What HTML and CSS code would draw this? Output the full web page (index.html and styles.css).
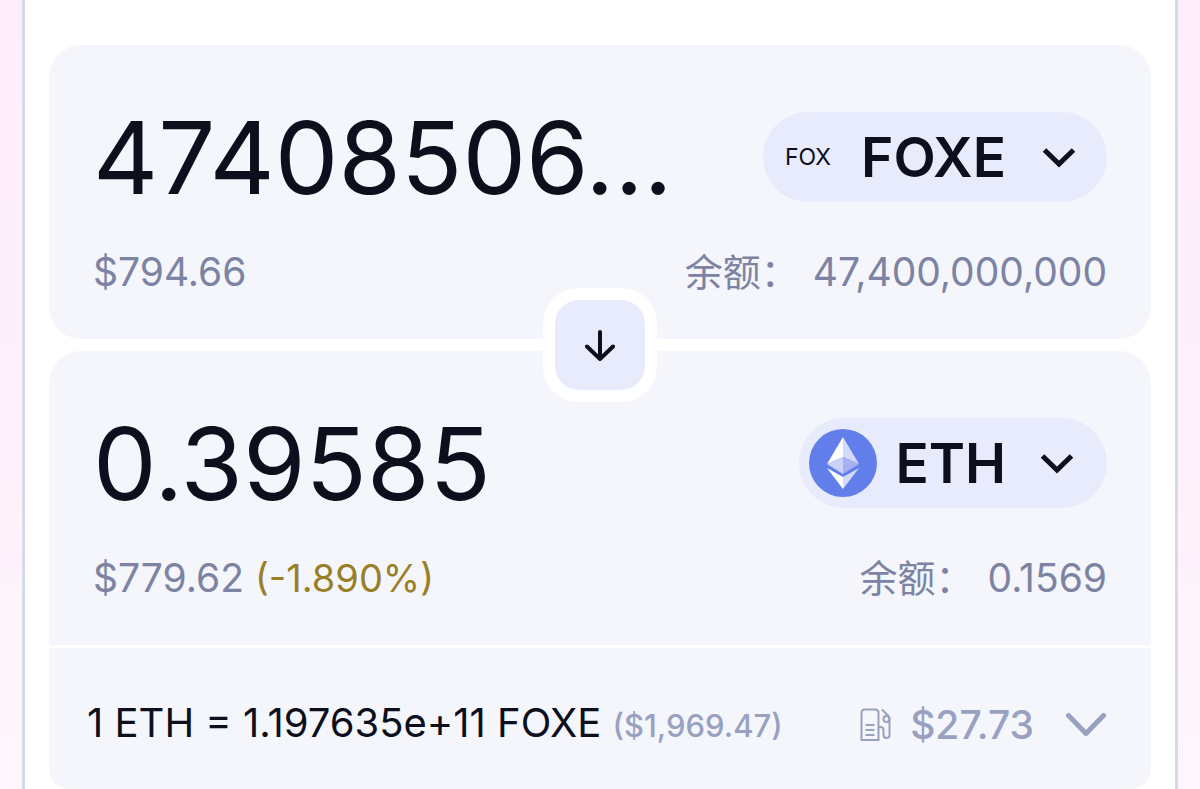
FILE: index.html
```html
<!DOCTYPE html>
<html lang="zh-CN">
<head>
<meta charset="utf-8">
<meta name="viewport" content="width=device-width, initial-scale=1">
<title>FOXE / ETH</title>
<link rel="stylesheet" href="styles.css">
</head>
<body>
<main class="swap">
  <section class="card card-pay">
    <div class="row">
      <input class="amount" type="text" aria-label="FOXE" value="47408506...">
      <button class="token token-text" type="button">
        <span class="token-mark">FOX</span>
        <span class="token-name">FOXE</span>
        <svg class="chevron" viewBox="0 0 34 22" aria-hidden="true"><path d="M2.500 4 17 18 31.500 4"/></svg>
      </button>
    </div>
    <div class="row row-info">
      <span>$794.66</span>
      <span class="balance"><span class="balance-label">余额：</span><span>47,400,000,000</span></span>
    </div>
  </section>

  <div class="switch">
    <button class="switch-button" type="button" aria-label="FOXE / ETH">
      <svg viewBox="0 0 32 32" aria-hidden="true"><path d="M16 3v27M3 17.500 16 30l13-12.500"/></svg>
    </button>
  </div>

  <section class="card card-receive">
    <div class="row">
      <input class="amount" type="text" aria-label="ETH" value="0.39585">
      <button class="token token-logo" type="button">
        <svg class="eth" viewBox="0 0 68 68" aria-hidden="true">
          <circle cx="34" cy="34" r="34" fill="#627eea"/>
          <path d="M34 8 18 35 34 28z" fill="#fff"/>
          <path d="M34 8v20l16 7z" fill="#d4daf9"/>
          <path d="M18 35 34 28v17z" fill="#cbd3f8"/>
          <path d="M34 28v17l16-10z" fill="#a5b1f0"/>
          <path d="M18 39 34 48v12z" fill="#fff"/>
          <path d="M34 48v12l16-21z" fill="#d4daf9"/>
        </svg>
        <span class="token-name">ETH</span>
        <svg class="chevron" viewBox="0 0 34 22" aria-hidden="true"><path d="M2.500 4 17 18 31.500 4"/></svg>
      </button>
    </div>
    <div class="row row-info">
      <span>$779.62 <span class="impact">(-1.890%)</span></span>
      <span class="balance"><span class="balance-label">余额：</span><span>0.1569</span></span>
    </div>
  </section>

  <section class="details">
    <p class="rate">1 ETH = 1.197635e+11 FOXE <span class="rate-usd">($1,969.47)</span></p>
    <button class="gas" type="button">
      <svg class="pump" viewBox="0 0 32 34" aria-hidden="true">
        <path d="M1.500 32V5q0-3.500 3.500-3.500h10q3.500 0 3.500 3.500v27zM5.500 17h9M5.500 22h9M5.500 27h9M18.500 19h2q3 0 3 3v5q0 3 3 3t3-3V11q0-2-1.500-3.500L22 1.500"/>
        <circle cx="26.500" cy="11" r="3"/>
      </svg>
      <span>$27.73</span>
      <svg class="expand" viewBox="0 0 40 24" aria-hidden="true"><path d="M2.500 2.500 20 20.500 37.500 2.500"/></svg>
    </button>
  </section>
</main>
</body>
</html>
```
FILE: styles.css
```css
* {
  box-sizing: border-box;
}

body {
  margin: 0;
  padding: 0 22px;
  background: linear-gradient(#feeefa, #fef1fb 60%, #fdf7fd);
  color: #0d0f1c;
  font-family: Inter, "Noto Sans CJK SC", sans-serif;
  font-size: 40px;
  line-height: 48px;
}

button,
input {
  border: 0;
  padding: 0;
  background: none;
  color: inherit;
  font: inherit;
}

svg {
  display: block;
  flex: none;
  fill: none;
  stroke: currentColor;
}

.swap {
  min-height: 100vh;
  padding: 45px 24px 0;
  border: solid #d5d9e8;
  border-width: 0 3px;
  background: #fff;
}

.card {
  padding: 66px 44px 0;
  height: 294px;
  background: #f4f6fb;
}

.card-pay {
  border-radius: 32px;
}

.card-receive {
  border-radius: 32px 32px 0 0;
}

.row {
  display: flex;
  align-items: center;
  justify-content: space-between;
}

.row-info {
  margin-top: 45px;
  color: #7d83a2;
  font-size: 39px;
}

.amount {
  flex: 1;
  min-width: 0;
  height: 92px;
  font-size: 101px;
  line-height: 92px;
}

.token {
  display: flex;
  align-items: center;
  height: 90px;
  border-radius: 45px;
  background: #e8ebfc;
  cursor: pointer;
}

.token-text {
  gap: 30px;
  padding: 0 31px 0 22px;
}

.token-logo {
  gap: 18px;
  padding: 0 33px 0 10px;
}

.token-mark {
  font-size: 23px;
}

.token-name {
  font-size: 55px;
  font-weight: 600;
}

.token-text .chevron {
  margin-left: 6px;
}

.token-logo .chevron {
  margin-left: 16px;
}

.chevron {
  width: 34px;
  height: 22px;
  stroke-width: 5;
}

.eth {
  width: 68px;
  height: 68px;
  stroke: none;
}

.balance {
  display: flex;
  gap: 14px;
}

.impact {
  color: #997f28;
  font-size: 38px;
}

.balance-label {
  font-size: 38px;
}

.switch {
  position: relative;
  display: flex;
  justify-content: center;
  height: 114px;
  margin: -51px 0;
  z-index: 1;
  pointer-events: none;
}

.switch-button {
  display: grid;
  place-items: center;
  width: 114px;
  height: 114px;
  border: 12px solid #fff;
  border-radius: 36px;
  background: #e8ebfc;
  pointer-events: auto;
  cursor: pointer;
}

.switch-button svg {
  width: 32px;
  height: 32px;
  stroke-width: 4;
  stroke-linecap: round;
  stroke-linejoin: round;
}

.details {
  display: flex;
  align-items: center;
  justify-content: space-between;
  height: 141px;
  margin-top: 3px;
  padding: 12px 45px 0 38px;
  border-radius: 0 0 20px 20px;
  background: #f4f6fb;
}

.rate {
  margin: 0;
}

.rate-usd {
  color: #98a1c0;
  font-size: 31px;
  font-weight: 500;
}

.gas {
  display: flex;
  align-items: center;
  gap: 18px;
  color: #98a1c0;
  font-size: 39px;
  font-weight: 500;
  cursor: pointer;
}

.pump {
  width: 32px;
  height: 34px;
  stroke-width: 2;
}

.expand {
  width: 40px;
  height: 24px;
  margin-left: 14px;
  stroke-width: 5;
  stroke-linecap: round;
  stroke-linejoin: round;
}
```
